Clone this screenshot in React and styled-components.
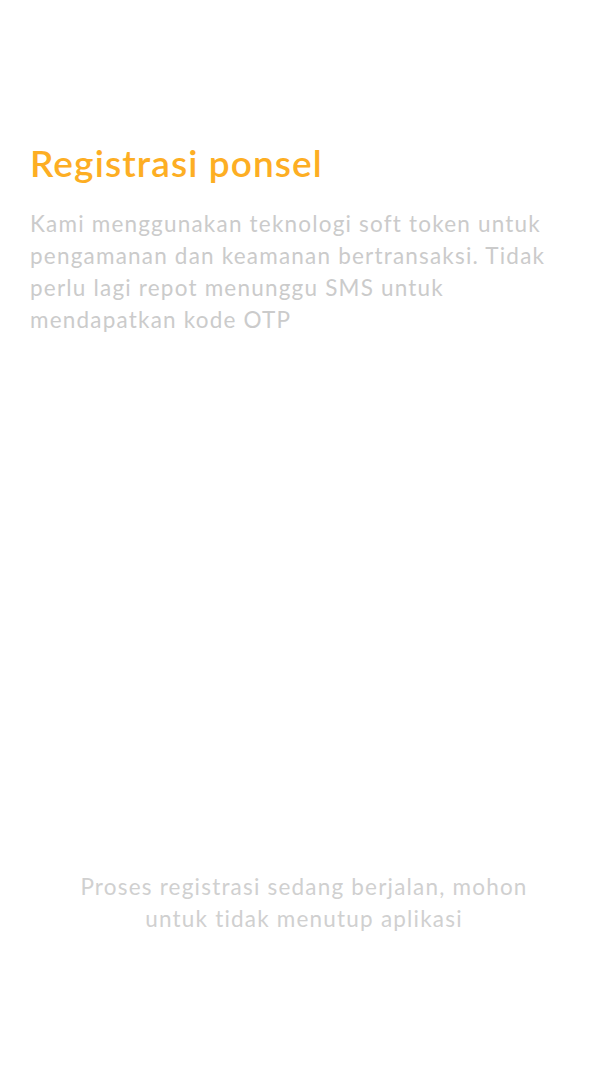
import React from "react";
import styled, { createGlobalStyle } from "styled-components";

const GlobalStyle = createGlobalStyle`
  html, body {
    margin: 0;
    padding: 0;
    background: #ffffff;
  }
  body {
    font-family: Lato, "Open Sans", sans-serif;
  }
`;

const RegistrationPage = () => {
  return (
    <>
      <GlobalStyle />
      <Wrapper>
        <Intro>
          <Title>Registrasi ponsel</Title>
          <Description>
            Kami menggunakan teknologi soft token untuk pengamanan dan keamanan
            bertransaksi. Tidak perlu lagi repot menunggu SMS untuk mendapatkan
            kode OTP
          </Description>
        </Intro>
        <StatusMessage>
          Proses registrasi sedang berjalan, mohon untuk tidak menutup aplikasi
        </StatusMessage>
      </Wrapper>
    </>
  );
};

const Wrapper = styled.div`
  box-sizing: border-box;
  display: flex;
  flex-direction: column;
  justify-content: space-between;
  height: 1080px;
  padding: 140px 30px 145px;
  width: 100%;
`;

const Intro = styled.div`
  display: flex;
  flex-direction: column;
  gap: 22px;
`;

const Title = styled.h1`
  color: #fdae23;
  font-size: 37px;
  font-weight: 600;
  letter-spacing: 1.1px;
  line-height: 46px;
  margin: 0;
`;

const Description = styled.p`
  color: #cbcbcb;
  font-size: 22.5px;
  letter-spacing: 1.2px;
  line-height: 32px;
  margin: 0;
  max-width: 535px;
`;

const StatusMessage = styled.p`
  align-self: center;
  color: #d0d0d0;
  font-size: 22.5px;
  letter-spacing: 1.2px;
  line-height: 32px;
  margin: 0;
  max-width: 470px;
  text-align: center;
`;

export default RegistrationPage;
